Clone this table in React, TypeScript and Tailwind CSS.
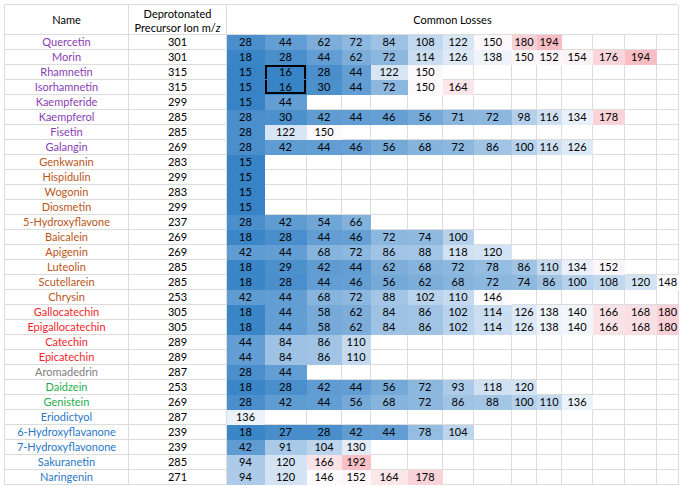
import type { CSSProperties } from 'react'

type Row = [string, string, number, number[]]

const PURPLE = '#8a3db3'
const BROWN = '#b9561a'
const RED = '#f41f2c'
const GRAY = '#808080'
const GREEN = '#1fae4e'
const BLUE = '#2a78c5'

const rows: Row[] = [
  ['Quercetin', PURPLE, 301, [28, 44, 62, 72, 84, 108, 122, 150, 180, 194]],
  ['Morin', PURPLE, 301, [18, 28, 44, 62, 72, 114, 126, 138, 150, 152, 154, 176, 194]],
  ['Rhamnetin', PURPLE, 315, [15, 16, 28, 44, 122, 150]],
  ['Isorhamnetin', PURPLE, 315, [15, 16, 30, 44, 72, 150, 164]],
  ['Kaempferide', PURPLE, 299, [15, 44]],
  ['Kaempferol', PURPLE, 285, [28, 30, 42, 44, 46, 56, 71, 72, 98, 116, 134, 178]],
  ['Fisetin', PURPLE, 285, [28, 122, 150]],
  ['Galangin', PURPLE, 269, [28, 42, 44, 46, 56, 68, 72, 86, 100, 116, 126]],
  ['Genkwanin', BROWN, 283, [15]],
  ['Hispidulin', BROWN, 299, [15]],
  ['Wogonin', BROWN, 283, [15]],
  ['Diosmetin', BROWN, 299, [15]],
  ['5-Hydroxyflavone', BROWN, 237, [28, 42, 54, 66]],
  ['Baicalein', BROWN, 269, [18, 28, 44, 46, 72, 74, 100]],
  ['Apigenin', BROWN, 269, [42, 44, 68, 72, 86, 88, 118, 120]],
  ['Luteolin', BROWN, 285, [18, 29, 42, 44, 62, 68, 72, 78, 86, 110, 134, 152]],
  ['Scutellarein', BROWN, 285, [18, 28, 44, 46, 56, 62, 68, 72, 74, 86, 100, 108, 120, 148]],
  ['Chrysin', BROWN, 253, [42, 44, 68, 72, 88, 102, 110, 146]],
  ['Gallocatechin', RED, 305, [18, 44, 58, 62, 84, 86, 102, 114, 126, 138, 140, 166, 168, 180]],
  ['Epigallocatechin', RED, 305, [18, 44, 58, 62, 84, 86, 102, 114, 126, 138, 140, 166, 168, 180]],
  ['Catechin', RED, 289, [44, 84, 86, 110]],
  ['Epicatechin', RED, 289, [44, 84, 86, 110]],
  ['Aromadedrin', GRAY, 287, [28, 44]],
  ['Daidzein', GREEN, 253, [18, 28, 42, 44, 56, 72, 93, 118, 120]],
  ['Genistein', GREEN, 269, [28, 42, 44, 56, 68, 72, 86, 88, 100, 110, 136]],
  ['Eriodictyol', BLUE, 287, [136]],
  ['6-Hydroxyflavanone', BLUE, 239, [18, 27, 28, 42, 44, 78, 104]],
  ['7-Hydroxyflavonone', BLUE, 239, [42, 91, 104, 130]],
  ['Sakuranetin', BLUE, 285, [94, 120, 166, 192]],
  ['Naringenin', BLUE, 271, [94, 120, 146, 152, 164, 178]],
]

const LOSS_COLS = 14

// three colour scale: blue at min, white around the middle, pink at max
function heat(v: number) {
  const lo = [55, 131, 198]
  const mid = [252, 252, 255]
  const hi = [248, 190, 196]
  const m = 147
  let a = lo
  let b = mid
  let t = 0
  if (v <= m) {
    t = (v - 15) / (m - 15)
  } else {
    a = mid
    b = hi
    t = Math.min(1, (v - m) / (194 - m))
  }
  const c = a.map((x, i) => Math.round(x + (b[i] - x) * t))
  return `rgb(${c[0]},${c[1]},${c[2]})`
}

function LossCell({ value, box }: { value?: number; box?: 'top' | 'bottom' }) {
  const style: CSSProperties = {}
  if (value !== undefined) {
    const c = heat(value)
    style.background = c
    style.borderColor = c
  }
  let cls = 'flex h-[15px] items-center justify-center border-r border-b border-[#dcdcdc] text-black'
  if (box === 'top') cls += ' shadow-[inset_2px_2px_0_#000,inset_-2px_0_0_#000]'
  if (box === 'bottom') cls += ' shadow-[inset_2px_-2px_0_#000,inset_-2px_0_0_#000]'
  return (
    <div className={cls} style={style}>
      {value}
    </div>
  )
}

export default function App() {
  return (
    <div className="h-[487px] w-[682px] bg-white pt-1 pl-1 font-['Lato','Liberation_Sans',sans-serif] text-[11px] leading-[14px]">
      <div className="grid w-[674px] grid-cols-[124px_98px_38px_42px_35px_29px_37px_35px_31px_38px_25px_25px_31px_32px_32px_22px] border-t border-l border-[#dcdcdc]">
        <div className="flex h-[30px] items-center justify-center border-r border-b border-[#dcdcdc] pt-[1px] text-black">
          Name
        </div>
        <div className="flex h-[30px] flex-col items-center justify-center border-r border-b border-[#dcdcdc] pt-[2px] text-black">
          <span>Deprotonated</span>
          <span>
            Precursor Ion m/<i>z</i>
          </span>
        </div>
        <div className="col-span-14 flex h-[30px] items-center justify-center border-r border-b border-[#dcdcdc] text-black">
          Common Losses
        </div>

        {rows.map(([name, color, ion, losses], r) => (
          <div key={name} className="contents">
            <div
              className="flex h-[15px] items-center justify-center border-r border-b border-[#dcdcdc] whitespace-nowrap"
              style={{ color }}
            >
              {name}
            </div>
            <div className="flex h-[15px] items-center justify-center border-r border-b border-[#dcdcdc] text-black">
              {ion}
            </div>
            {Array.from({ length: LOSS_COLS }, (_, i) => (
              <LossCell
                key={i}
                value={losses[i]}
                box={i === 1 && r === 2 ? 'top' : i === 1 && r === 3 ? 'bottom' : undefined}
              />
            ))}
          </div>
        ))}
      </div>
    </div>
  )
}
